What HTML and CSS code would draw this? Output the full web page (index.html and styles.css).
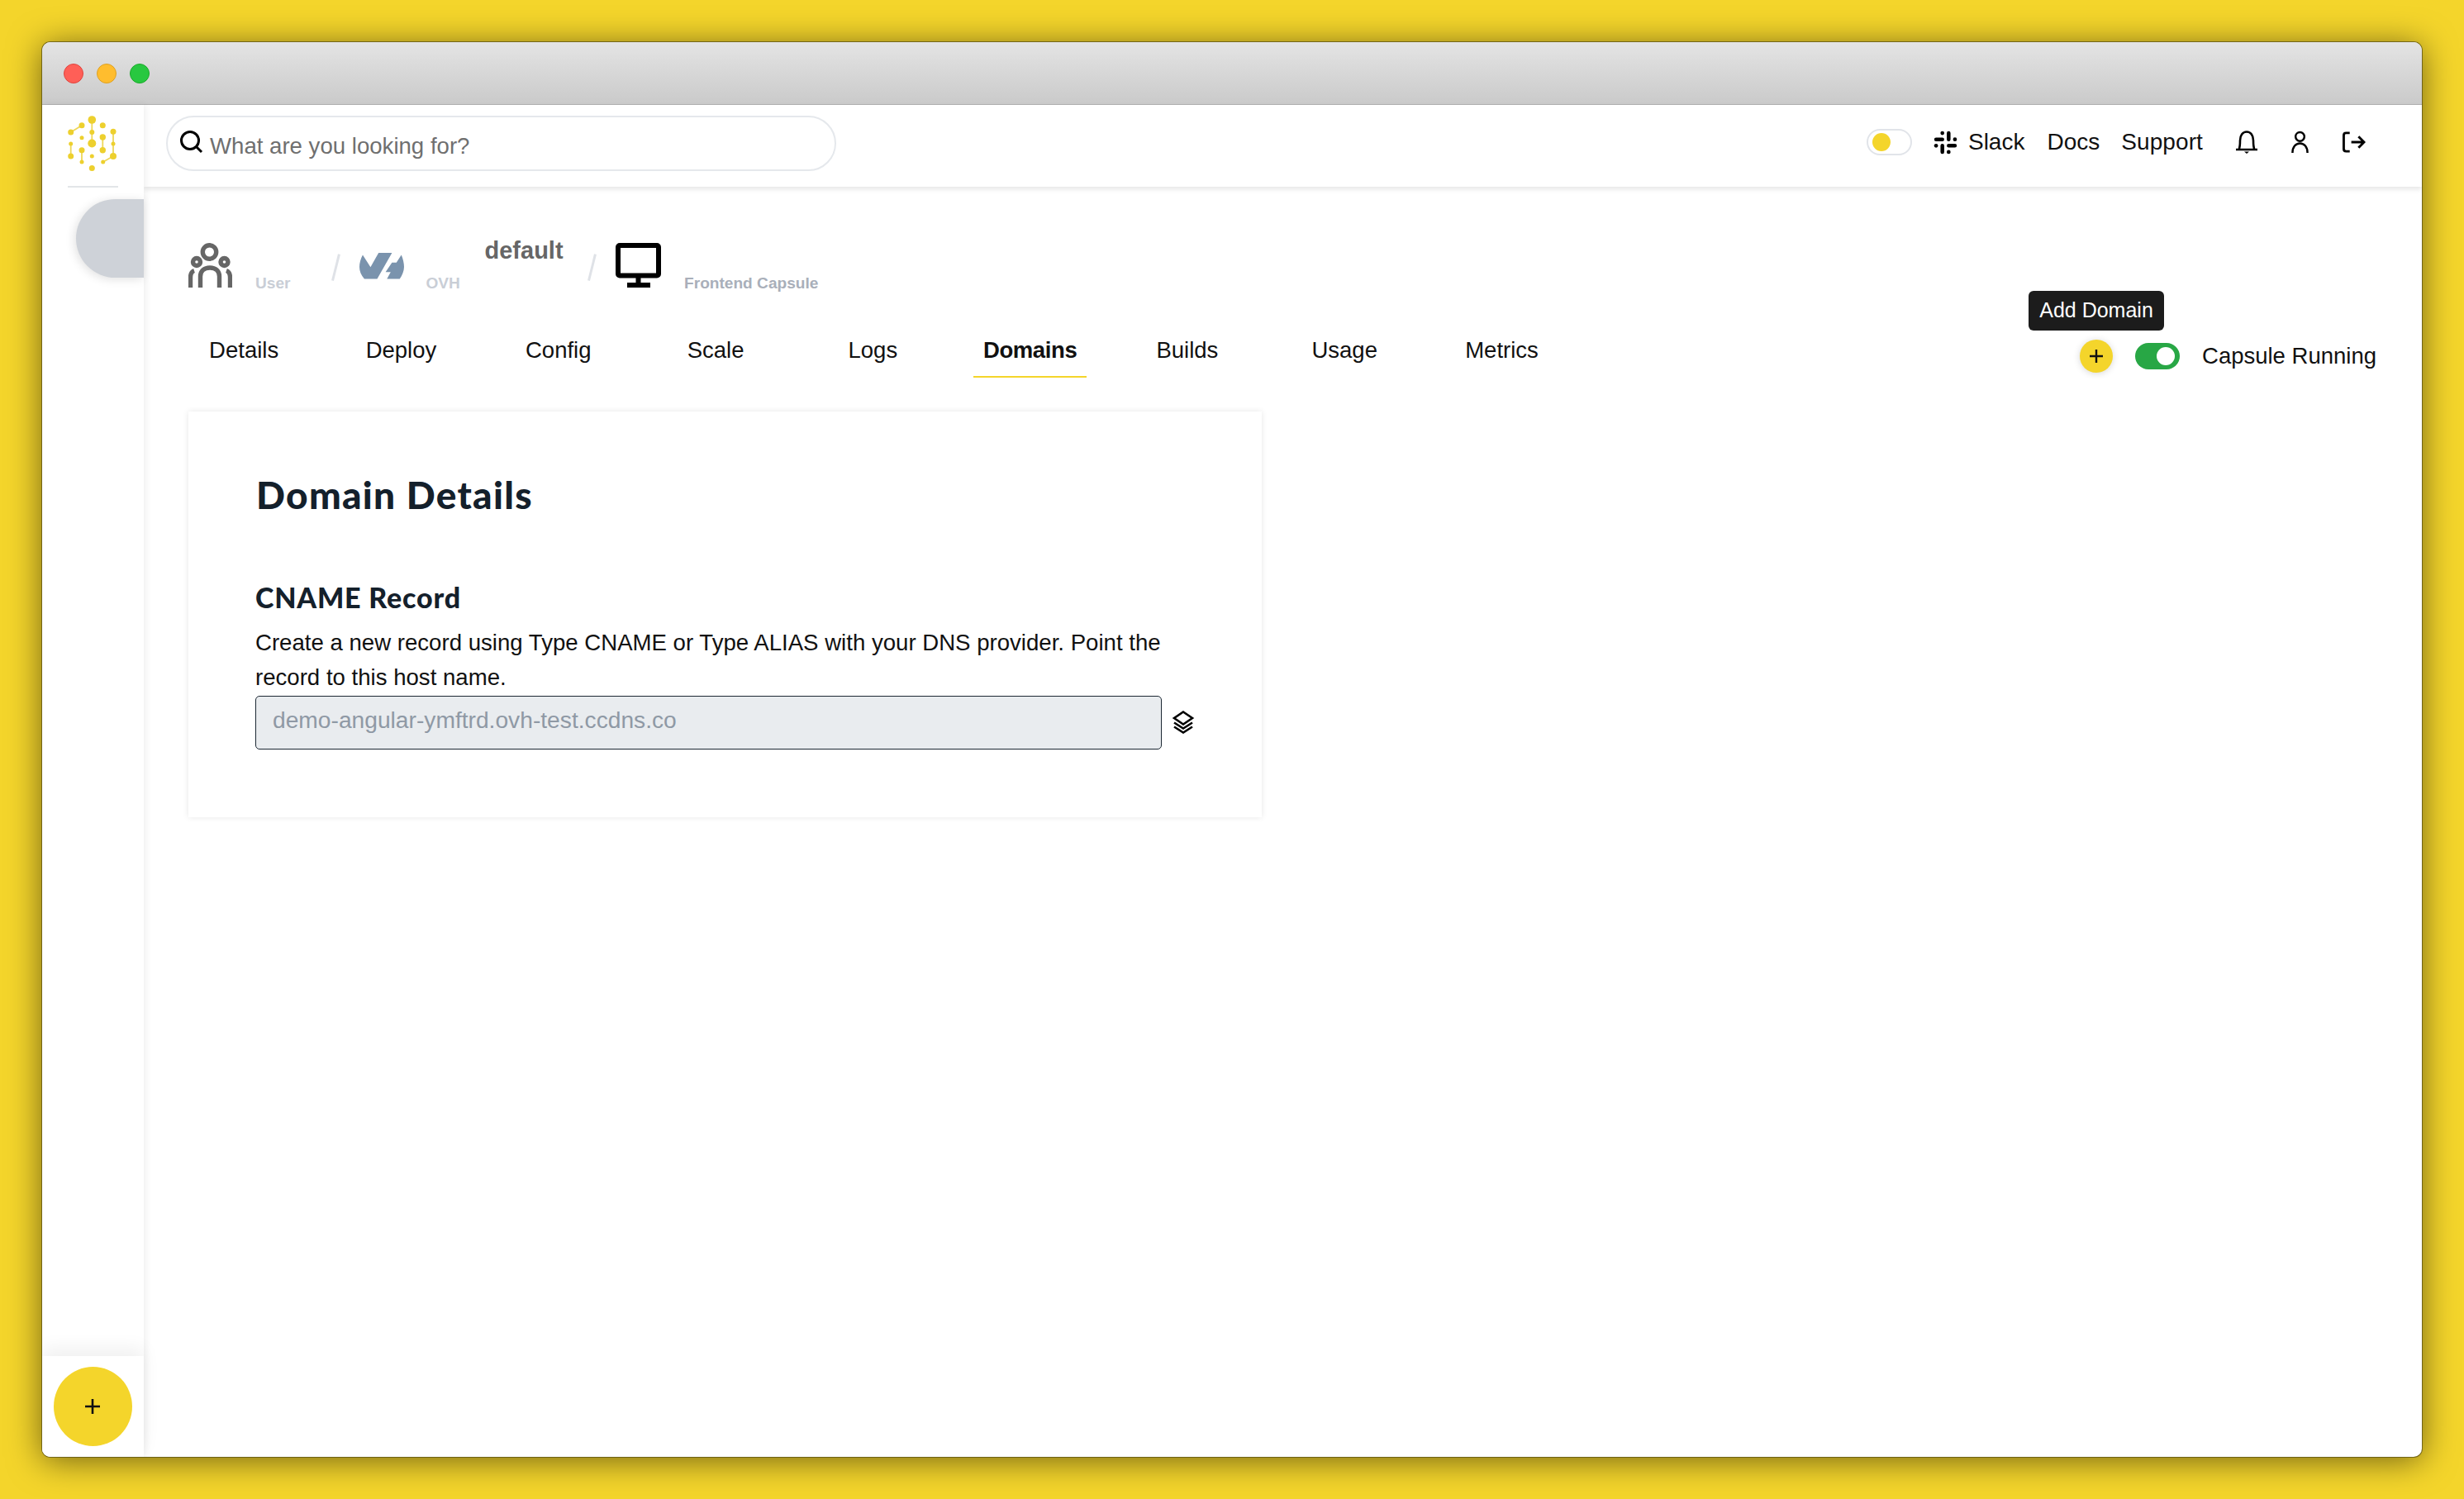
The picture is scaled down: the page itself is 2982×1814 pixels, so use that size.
FILE: index.html
```html
<!DOCTYPE html>
<html lang="en">
<head>
<meta charset="utf-8">
<title>Domains</title>
<link rel="stylesheet" href="styles.css">
</head>
<body>
<div class="window">
  <div class="titlebar">
    <span class="dot red"></span><span class="dot amber"></span><span class="dot green"></span>
  </div>
  <div class="app">
    <aside class="sidebar">
      <div class="logo-wrap">
        <svg class="logo" viewBox="0 0 60 68">
          <g stroke="#eed75a" stroke-width="1.8" fill="none">
            <path d="M29.3 5V33.5M17 11.7L3.7 20M55 19.3V49M42.3 26V41.7M3.7 34V49M17 41.7V56M42.7 56L55 49"/>
          </g>
          <g fill="#edd02e">
            <circle cx="29.3" cy="5" r="4.8"/><circle cx="29.3" cy="20" r="3"/><circle cx="29.3" cy="33.5" r="5"/>
            <circle cx="17" cy="11.7" r="3.5"/><circle cx="3.7" cy="20" r="3.5"/><circle cx="42.3" cy="11.7" r="3.5"/>
            <circle cx="55" cy="19.3" r="3.5"/><circle cx="55" cy="34" r="2.5"/><circle cx="55" cy="49" r="4"/>
            <circle cx="42.3" cy="26" r="3.7"/><circle cx="42.3" cy="41.7" r="3.7"/><circle cx="17" cy="26.7" r="2.5"/>
            <circle cx="3.7" cy="34" r="2.5"/><circle cx="3.7" cy="49" r="3.5"/><circle cx="17" cy="41.7" r="3.5"/>
            <circle cx="17" cy="56" r="2.5"/><circle cx="29.3" cy="49" r="2.5"/><circle cx="42.7" cy="56" r="2.5"/>
            <circle cx="29.3" cy="63.5" r="3.5"/>
          </g>
        </svg>
      </div>
      <div class="side-rule"></div>
      <div class="side-pill"></div>
      <div class="side-foot">
        <button class="fab">
          <svg class="fab-plus" viewBox="0 0 20 20"><path d="M10 1V19M1 10H19"/></svg>
        </button>
      </div>
    </aside>
    <main class="main">
      <header class="topbar">
        <div class="search">
          <svg class="search-icon" viewBox="0 0 28 28"><circle cx="12" cy="12" r="10.5"/><path d="M19.5 19.5L26 26"/></svg>
          <span class="search-text">What are you looking for?</span>
        </div>
        <div class="top-right">
          <span class="mode"><span class="mode-knob"></span></span>
          <svg class="slack" viewBox="0 0 16 16"><path d="M1.7 5.9H5.9M10.1 1.700V5.900M10.100 10.100H14.300M5.900 10.100V14.300"/><circle cx="5.900" cy="1.700" r="1.300"/><circle cx="14.300" cy="5.900" r="1.300"/><circle cx="10.100" cy="14.300" r="1.300"/><circle cx="1.700" cy="10.100" r="1.300"/></svg>
          <a class="top-link slack-link">Slack</a>
          <a class="top-link docs-link">Docs</a>
          <a class="top-link support-link">Support</a>
          <svg class="ti bell" viewBox="0 0 28 28"><path d="M1 23H27M4.5 23C6 20 6 17 6 12C6 6 9 1.5 14 1.5S22 6 22 12C22 17 22 20 23.5 23"/><path class="solid" d="M11 25.5H17L14 28Z"/></svg>
          <svg class="ti person" viewBox="0 0 22 28"><circle cx="11" cy="7" r="5.6"/><path d="M1.5 27.5C1.5 20 5.5 15.5 11 15.5S20.5 20 20.5 27.5"/></svg>
          <svg class="ti logout" viewBox="0 0 29 26"><path d="M9 1.5H4.5Q1.5 1.500 1.500 4.500V21.500Q1.500 24.500 4.500 24.500H9M11 13H27M20 6L27 13L20 20"/></svg>
        </div>
      </header>

      <div class="crumbs">
        <svg class="crumb-user" viewBox="0 0 53 54">
          <circle cx="25.500" cy="11" r="8.200"/><circle cx="10" cy="23" r="4.500"/><circle cx="43.500" cy="23" r="4.500"/>
          <path d="M14.500 54V40.500C14.500 34 19 30 26 30S37.500 34 37.500 40.500V54M2.500 54V42C2.500 37 4 34.500 7 33.500M50.500 54V42C50.500 37 49 34.500 46 33.500"/>
        </svg>
        <span class="crumb-label user-label">User</span>
        <span class="crumb-slash first-slash"></span>
        <svg class="crumb-ovh" viewBox="0 0 54.300 32">
          <path d="M4 2.300L13.500 17.300L23.300 0H39.600L21.600 31.700H6C2 27 0 22 0 17C0 12 1.500 7 4 2.300Z"/>
          <path d="M51 2.300C53 7 54.300 12 54.300 17C54.300 22 52 27.500 49 31.700H33.500L38 23.300H31.800L39.600 11.700H45Z"/>
        </svg>
        <span class="crumb-label ovh-label">OVH</span>
        <span class="crumb-default">default</span>
        <span class="crumb-slash second-slash"></span>
        <svg class="crumb-monitor" viewBox="0 0 55 54">
          <rect class="screen" x="3" y="3" width="49" height="36.500" rx="2"/>
          <rect x="24.500" y="41" width="6" height="8"/><rect x="14" y="48" width="28" height="6"/>
        </svg>
        <span class="crumb-label capsule-label">Frontend Capsule</span>
      </div>

      <div class="tabbar">
        <nav class="tabs">
          <a class="tab"><span class="tab-in">Details</span></a>
          <a class="tab"><span class="tab-in">Deploy</span></a>
          <a class="tab"><span class="tab-in">Config</span></a>
          <a class="tab"><span class="tab-in">Scale</span></a>
          <a class="tab"><span class="tab-in">Logs</span></a>
          <a class="tab active"><span class="tab-in">Domains</span></a>
          <a class="tab"><span class="tab-in">Builds</span></a>
          <a class="tab"><span class="tab-in">Usage</span></a>
          <a class="tab"><span class="tab-in">Metrics</span></a>
        </nav>
        <div class="capsule-ctl">
          <button class="add">
            <span class="tooltip">Add Domain</span>
            <svg class="add-plus" viewBox="0 0 20 20"><path d="M10 2V18M2 10H18"/></svg>
          </button>
          <span class="run-toggle"><span class="run-knob"></span></span>
          <span class="run-label">Capsule Running</span>
        </div>
      </div>

      <section class="card">
        <h1 class="card-title">Domain Details</h1>
        <h2 class="card-sub">CNAME Record</h2>
        <p class="card-text">Create a new record using Type CNAME or Type ALIAS with your DNS provider. Point the record to this host name.</p>
        <div class="field-row">
          <div class="field">demo-angular-ymftrd.ovh-test.ccdns.co</div>
          <svg class="copy" viewBox="0 0 28 28">
            <path d="M14 1.500L25 9L14 16.500L3 9Z"/><path d="M3 14.500L14 21.500L25 14.500M3 19.500L14 26.500L25 19.500"/>
          </svg>
        </div>
      </section>
    </main>
  </div>
</div>
</body>
</html>
```

FILE: styles.css
```css
* { box-sizing: border-box; }
html, body { margin: 0; height: 100%; }
body {
  background: #f4d52b;
  padding: 51px 50px 51px 51px;
  font-family: "Liberation Sans", Arial, sans-serif;
  color: #111;
  overflow: hidden;
}
.window {
  width: 2880px;
  height: 1712px;
  border-radius: 10px;
  overflow: hidden;
  background: #fff;
  display: flex;
  flex-direction: column;
  box-shadow: 0 0 0 1px rgba(90, 80, 20, .75), 0 4px 40px rgba(0, 0, 0, .55);
}
.titlebar {
  height: 76px;
  flex: none;
  display: flex;
  align-items: center;
  gap: 16px;
  padding-left: 26px;
  background: linear-gradient(#e4e4e4, #cacaca);
  border-bottom: 1px solid #b2b2b2;
}
.dot { width: 24px; height: 24px; border-radius: 50%; }
.red { background: #ff5f57; border: 1px solid #e0443e; }
.amber { background: #ffbd2e; border: 1px solid #dea123; }
.green { background: #28c840; border: 1px solid #1aab29; }
.app { flex: 1; display: flex; min-height: 0; }

.sidebar {
  width: 123px;
  flex: none;
  display: flex;
  flex-direction: column;
  position: relative;
  z-index: 2;
  box-shadow: 2px 0 8px rgba(0, 0, 0, .07);
  background: #fff;
}
.logo-wrap { height: 98px; padding: 13px 0 0 31px; flex: none; }
.logo { width: 60px; height: 68px; display: block; }
.side-rule { width: 61px; height: 2px; margin-left: 31px; background: #e3e5e8; flex: none; }
.side-pill {
  width: 82px;
  height: 95px;
  margin: 14px 0 0 41px;
  flex: none;
  background: #ced2d8;
  border-radius: 48px 0 0 48px;
  box-shadow: -2px 2px 12px rgba(0, 0, 0, .12);
}
.side-foot {
  margin-top: auto;
  height: 122px;
  padding: 13px 0 0 14px;
  background: #fff;
  box-shadow: 0 -10px 20px rgba(0, 0, 0, .06);
  flex: none;
}
.fab {
  width: 95px;
  height: 96px;
  padding: 0;
  border: 0;
  border-radius: 50%;
  background: #f4d52b;
  display: flex;
  align-items: center;
  justify-content: center;
}
.fab-plus { width: 20px; height: 20px; fill: none; stroke: #111; stroke-width: 2.6; margin-left: -2px; }

.main { flex: 1; min-width: 0; display: flex; flex-direction: column; }
.topbar {
  height: 99px;
  flex: none;
  display: flex;
  align-items: flex-start;
  padding: 13px 55px 0 27px;
  box-shadow: 0 3px 6px rgba(0, 0, 0, .1);
  background: #fff;
}
.search {
  width: 811px;
  height: 67px;
  border: 2.500px solid #e5e8ec;
  border-radius: 34px;
  display: flex;
  align-items: center;
  padding-left: 15px;
  gap: 8px;
}
.search-icon { width: 28px; height: 28px; margin-top: -4px; fill: none; stroke: #000; stroke-width: 3; flex: none; }
.search-text { font-size: 27.600px; color: #6f6f6f; margin-top: 7px; }
.top-right { margin-left: auto; display: flex; align-items: center; height: 64px; }
.mode {
  width: 55px;
  height: 32px;
  border: 2px solid #e1e4e9;
  border-radius: 16px;
  padding: 3px 0 0 5px;
  margin-right: 26px;
}
.mode-knob { display: block; width: 22px; height: 22px; border-radius: 50%; background: #f4d52b; }
.slack { width: 29px; height: 29px; fill: #000; stroke: none; margin-right: 13px; }
.slack path { fill: none; stroke: #000; stroke-width: 2.500; stroke-linecap: round; }
.top-link { font-size: 28px; color: #111; margin-top: -1px; }
.slack-link { margin-right: 27px; }
.docs-link { margin-right: 26px; }
.support-link { margin-right: 39px; letter-spacing: .1px; }
.ti { fill: none; stroke: #000; stroke-width: 2.600; }
.ti .solid { fill: #000; stroke: none; }
.bell { width: 28px; height: 28px; margin-right: 40px; }
.person { width: 21px; height: 28px; margin-right: 41px; }
.logout { width: 28px; height: 26px; stroke-width: 3; margin-right: 13px; }

.crumbs { height: 54px; margin-top: 68px; padding-left: 54px; display: flex; align-items: flex-end; flex: none; }
.crumb-user { width: 53px; height: 54px; fill: none; stroke: #666; stroke-width: 5.400; flex: none; }
.crumb-label { font-size: 19.100px; font-weight: 700; color: #c9ced6; line-height: 19px; margin-bottom: -4px; flex: none; }
.user-label { margin-left: 28px; width: 42px; }
.crumb-slash {
  width: 2.500px;
  height: 33px;
  background: #dfe2e7;
  transform: rotate(14deg);
  margin-bottom: 8px;
  flex: none;
}
.first-slash { margin-left: 54px; }
.crumb-ovh { width: 54px; height: 32px; fill: #7a93ad; margin: 0 0 10px 27px; flex: none; }
.ovh-label { margin-left: 27px; width: 41px; }
.crumb-default {
  font-size: 29px;
  font-weight: 700;
  color: #666;
  align-self: flex-start;
  margin: -7px 0 0 30px;
  line-height: 32px;
  flex: none;
}
.second-slash { margin-left: 33px; }
.crumb-monitor { width: 55px; height: 54px; margin-left: 28px; flex: none; }
.crumb-monitor rect { fill: #000; }
.crumb-monitor .screen { fill: none; stroke: #000; stroke-width: 6; }
.capsule-label { margin-left: 28px; color: #a9afba; }

.tabbar {
  height: 62px;
  margin-top: 49px;
  padding: 0 55px 0 26px;
  display: flex;
  align-items: flex-start;
  flex: none;
}
.tabs { display: flex; }
.tab { width: 190.300px; height: 62px; display: flex; justify-content: center; font-size: 27.500px; }
.tab-in { padding: 11px 12px 0; height: 60px; }
.active { font-weight: 700; letter-spacing: -.4px; }
.active .tab-in { border-bottom: 2px solid #f4d52b; }
.capsule-ctl { margin-left: auto; display: flex; align-items: center; height: 70px; margin-top: -1px; }
.add {
  position: relative;
  width: 40px;
  height: 40px;
  padding: 0;
  border: 0;
  border-radius: 50%;
  background: #f4d52b;
  box-shadow: 0 1px 8px rgba(0, 0, 0, .16);
  display: flex;
  align-items: center;
  justify-content: center;
  margin-right: 27px;
}
.add-plus { width: 20px; height: 20px; fill: none; stroke: #111; stroke-width: 2.400; }
.tooltip {
  position: absolute;
  left: -62px;
  top: -59px;
  width: 164px;
  height: 48px;
  border-radius: 6px;
  background: #1c1c1c;
  color: #fff;
  font-size: 25px;
  font-weight: 400;
  line-height: 46px;
  text-align: center;
}
.run-toggle {
  width: 54px;
  height: 32px;
  border-radius: 16px;
  background: #28a745;
  position: relative;
  margin-right: 27px;
}
.run-knob { position: absolute; right: 6px; top: 5px; width: 22px; height: 22px; border-radius: 50%; background: #fff; }
.run-label { font-size: 27.500px; white-space: nowrap; }

.card {
  width: 1299px;
  height: 491px;
  margin: 39px 0 0 54px;
  padding: 73px 0 0 81px;
  flex: none;
  box-shadow: 0 0 7px rgba(0, 0, 0, .1);
  background: #fff;
}
.card-title {
  margin: 0 0 0 1px;
  font-family: Lato, sans-serif;
  font-weight: 900;
  font-size: 46px;
  line-height: 56px;
  letter-spacing: 1.300px;
  color: #14202b;
}
.card-sub {
  margin: 75px 0 0;
  font-family: Lato, sans-serif;
  font-weight: 900;
  font-size: 34px;
  line-height: 42px;
  letter-spacing: .8px;
  color: #14202b;
}
.card-text { margin: 13px 0 0; width: 1110px; font-size: 27.600px; line-height: 42px; color: #111; }
.field-row { display: flex; align-items: center; margin-top: 1px; }
.field {
  width: 1097px;
  height: 65px;
  border: 1.500px solid #1c2833;
  border-radius: 5px;
  background: #e9ecef;
  color: #8f99a5;
  font-size: 28.200px;
  line-height: 56px;
  padding-left: 20px;
  flex: none;
}
.copy { width: 28px; height: 28px; margin-left: 12px; margin-top: -2px; fill: none; stroke: #000; stroke-width: 2.600; flex: none; }
```
